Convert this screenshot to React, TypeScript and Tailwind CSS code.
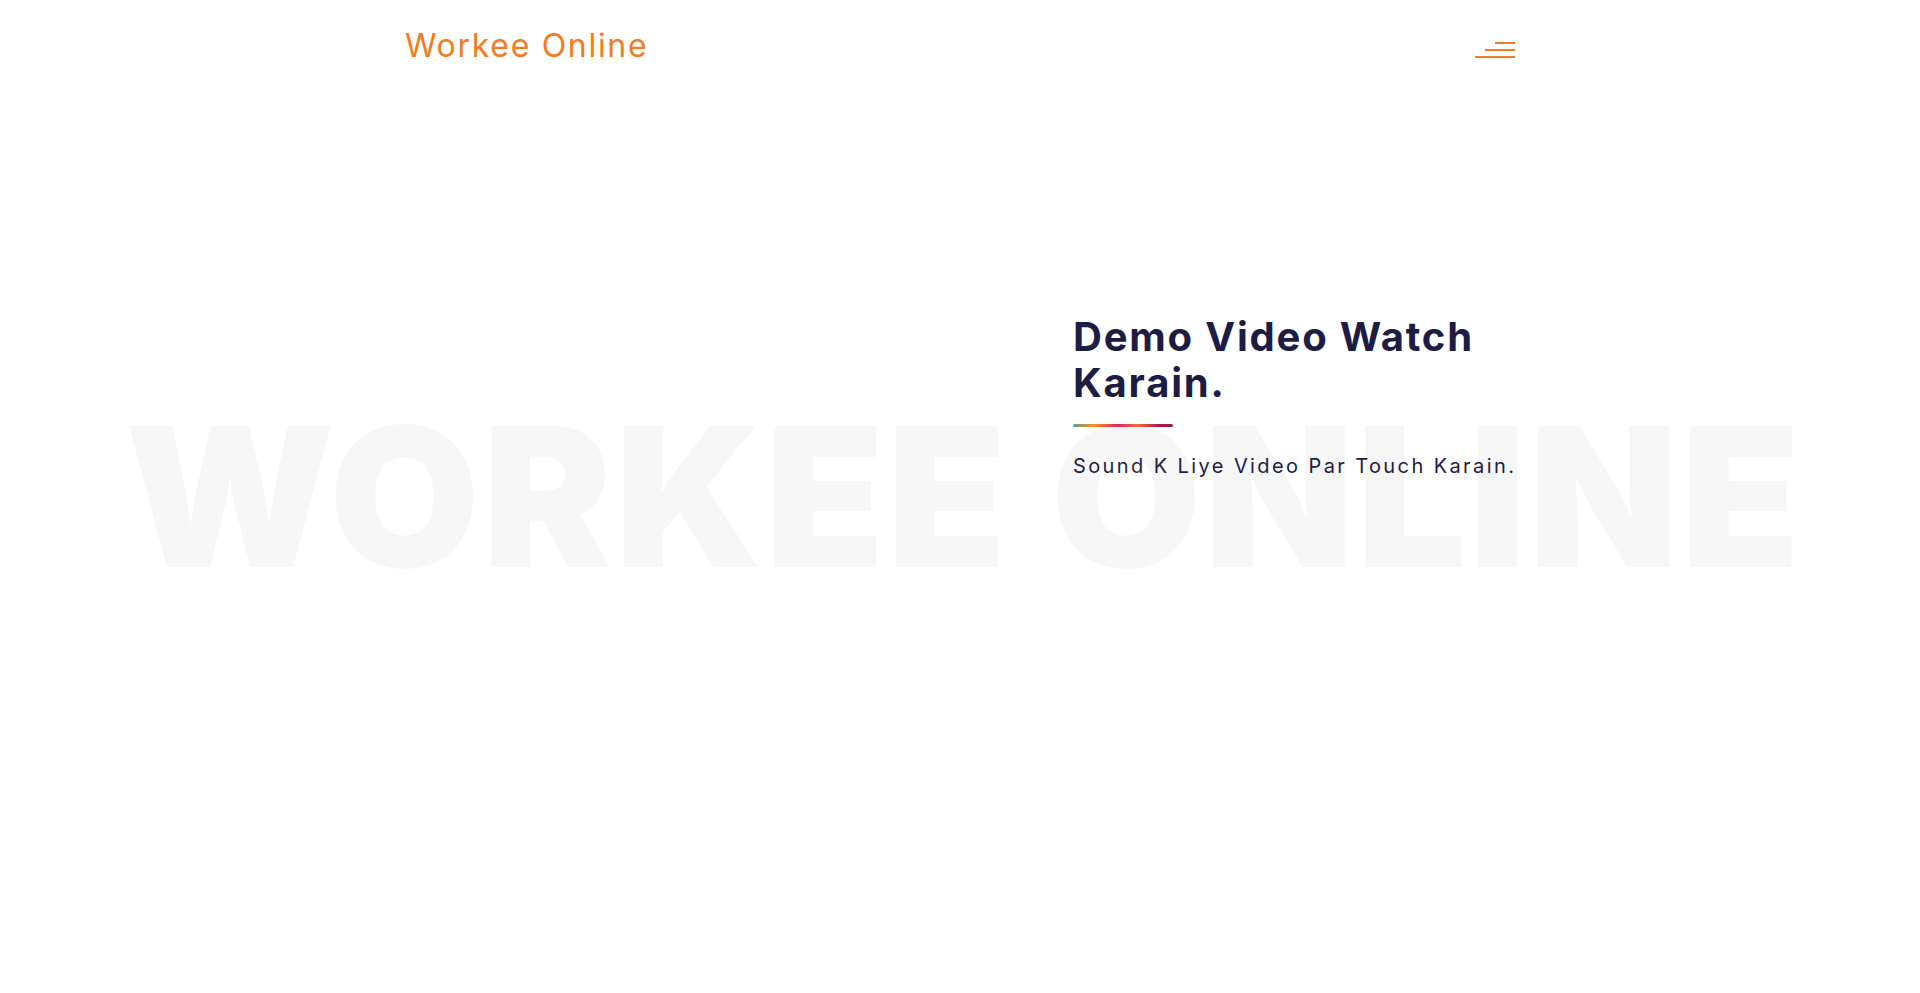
import React from "react";

export default function App() {
  return (
    <div className="relative min-h-screen w-full overflow-hidden bg-white font-['Inter',sans-serif]">
      {/* Watermark */}
      <div className="pointer-events-none absolute left-0 right-0 top-[400px] z-0 flex justify-center pl-[8px]">
        <div className="whitespace-nowrap text-[194px] font-black leading-none tracking-[3px] text-[#f6f6f6]">
          WORKEE ONLINE
        </div>
      </div>

      {/* Header */}
      <header className="relative z-10 mx-auto flex w-[1110px] items-start justify-between pt-[22px]">
        <div className="text-[32px] leading-[48px] tracking-[1.7px] text-[#f47b20]">Workee Online</div>
        <button className="mt-[20px] flex flex-col items-end gap-[5px]" aria-label="menu">
          <span className="block h-[2px] w-[20px] bg-[#f47b20]" />
          <span className="block h-[2px] w-[30px] bg-[#f47b20]" />
          <span className="block h-[2px] w-[40px] bg-[#f47b20]" />
        </button>
      </header>

      {/* Hero */}
      <main className="relative z-10 mx-auto grid w-[1140px] grid-cols-12 pt-[244px]">
        <div className="col-span-7" />
        <div className="col-span-5 pl-[18px] pr-[12px]">
          <h1 className="text-[40px] font-bold leading-[46px] tracking-[1.8px] text-[#1c1c45]">
            Demo Video Watch Karain.
          </h1>
          <div className="mt-[18px] h-[3px] w-[100px] rounded-full bg-[linear-gradient(90deg,#5f9e80_0%,#f7941d_20%,#e91e63_45%,#f26b3a_65%,#b5164b_85%,#8e1a5a_100%)]" />
          <p className="mt-[24px] whitespace-nowrap text-[20px] leading-[30px] tracking-[2.4px] text-[#1c1c45]">
            Sound K Liye Video Par Touch Karain.
          </p>
        </div>
      </main>
    </div>
  );
}
